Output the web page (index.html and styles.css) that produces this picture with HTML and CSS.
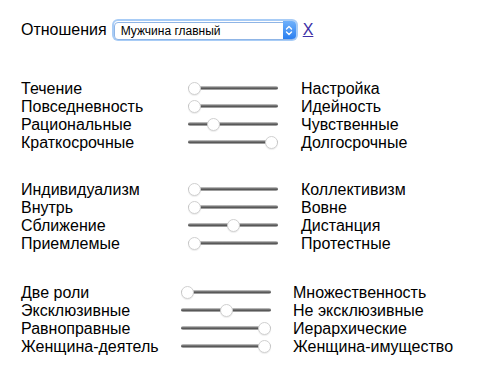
FILE: index.html
```html
<!DOCTYPE html>
<html lang="ru">
<head>
  <meta charset="UTF-8">
  <title>Отношения</title>
  <link rel="stylesheet" href="styles.css">
</head>
<body>
  <div class="page">
    <div class="head">
      <label>Отношения</label>
      <span class="picker">
        <select>
          <option>Мужчина главный</option>
          <option>Женщина главная</option>
          <option>Равные</option>
        </select>
        <span class="arrows">
          <svg width="12" height="17" viewBox="0 0 12 17">
            <path d="M3.5 7 L6 4.5 L8.5 7 M3.5 10 L6 12.5 L8.5 10" fill="none" stroke="#fff" stroke-width="1.4" stroke-linecap="round" stroke-linejoin="round"/>
          </svg>
        </span>
      </span>
      <a href="#" class="close">X</a>
    </div>

    <table class="scales wide">
      <tr><td>Течение</td><td><input type="range" value="0"></td><td>Настройка</td></tr>
      <tr><td>Повседневность</td><td><input type="range" value="0"></td><td>Идейность</td></tr>
      <tr><td>Рациональные</td><td><input type="range" value="25"></td><td>Чувственные</td></tr>
      <tr><td>Краткосрочные</td><td><input type="range" value="100"></td><td>Долгосрочные</td></tr>
    </table>

    <table class="scales wide">
      <tr><td>Индивидуализм</td><td><input type="range" value="0"></td><td>Коллективизм</td></tr>
      <tr><td>Внутрь</td><td><input type="range" value="0"></td><td>Вовне</td></tr>
      <tr><td>Сближение</td><td><input type="range" value="50"></td><td>Дистанция</td></tr>
      <tr><td>Приемлемые</td><td><input type="range" value="0"></td><td>Протестные</td></tr>
    </table>

    <table class="scales narrow">
      <tr><td>Две роли</td><td><input type="range" value="0"></td><td>Множественность</td></tr>
      <tr><td>Эксклюзивные</td><td><input type="range" value="50"></td><td>Не эксклюзивные</td></tr>
      <tr><td>Равноправные</td><td><input type="range" value="100"></td><td>Иерархические</td></tr>
      <tr><td>Женщина-деятель</td><td><input type="range" value="100"></td><td>Женщина-имущество</td></tr>
    </table>
  </div>
</body>
</html>
```

FILE: styles.css
```css
body {
  margin: 0;
  font-family: "Liberation Sans", Arial, sans-serif;
  font-size: 16px;
  color: #000;
  background: #fff;
}
.page {
  padding: 19px 21px;
}
.head {
  display: flex;
  align-items: center;
  height: 22px;
}
.head label {
  margin-right: 7px;
}
.picker {
  position: relative;
  display: inline-block;
  width: 182px;
  height: 18px;
  border-radius: 4px;
  box-shadow: 0 0 0 2px #a8ccf6;
}
.picker select {
  -webkit-appearance: none;
  appearance: none;
  width: 100%;
  height: 18px;
  margin: 0;
  padding: 0 0 0 6px;
  font-family: "Liberation Sans", Arial, sans-serif;
  font-size: 12px;
  color: #000;
  background: #fff;
  border: 1px solid #8fb5e6;
  border-radius: 4px;
  outline: none;
}
.arrows {
  position: absolute;
  top: 0;
  right: 0;
  width: 13px;
  height: 18px;
  display: flex;
  align-items: center;
  justify-content: center;
  background: linear-gradient(#6fb1fb, #2a7ff0);
  border-radius: 0 4px 4px 0;
}
.close {
  margin-left: 7px;
  color: #3c2fa6;
  font-size: 16px;
}
.scales {
  border-collapse: collapse;
  margin-top: 38px;
}
.scales + .scales {
  margin-top: 29px;
}
.scales.narrow {
  margin-top: 31px;
}
.scales td {
  padding: 0;
  height: 18px;
  line-height: 17px;
  white-space: nowrap;
}
.wide td:first-child { width: 167px; }
.wide td:nth-child(2) { width: 113px; }
.narrow td:first-child { width: 160px; }
.narrow td:nth-child(2) { width: 112px; }

input[type="range"] {
  -webkit-appearance: none;
  appearance: none;
  display: block;
  width: 90px;
  height: 14px;
  margin: 0;
  padding: 0;
  background: transparent;
}
input[type="range"]::-webkit-slider-runnable-track {
  height: 4px;
  border-radius: 2px;
  background: linear-gradient(#d8d8d8, #7a7a7a 35%, #555 65%, #c8c8c8);
}
input[type="range"]::-webkit-slider-thumb {
  -webkit-appearance: none;
  width: 13px;
  height: 13px;
  margin-top: -4.5px;
  border-radius: 50%;
  background: #fff;
  border: 1px solid #d0d0d0;
  box-shadow: 0 1px 1px rgba(0, 0, 0, 0.08);
}
```
